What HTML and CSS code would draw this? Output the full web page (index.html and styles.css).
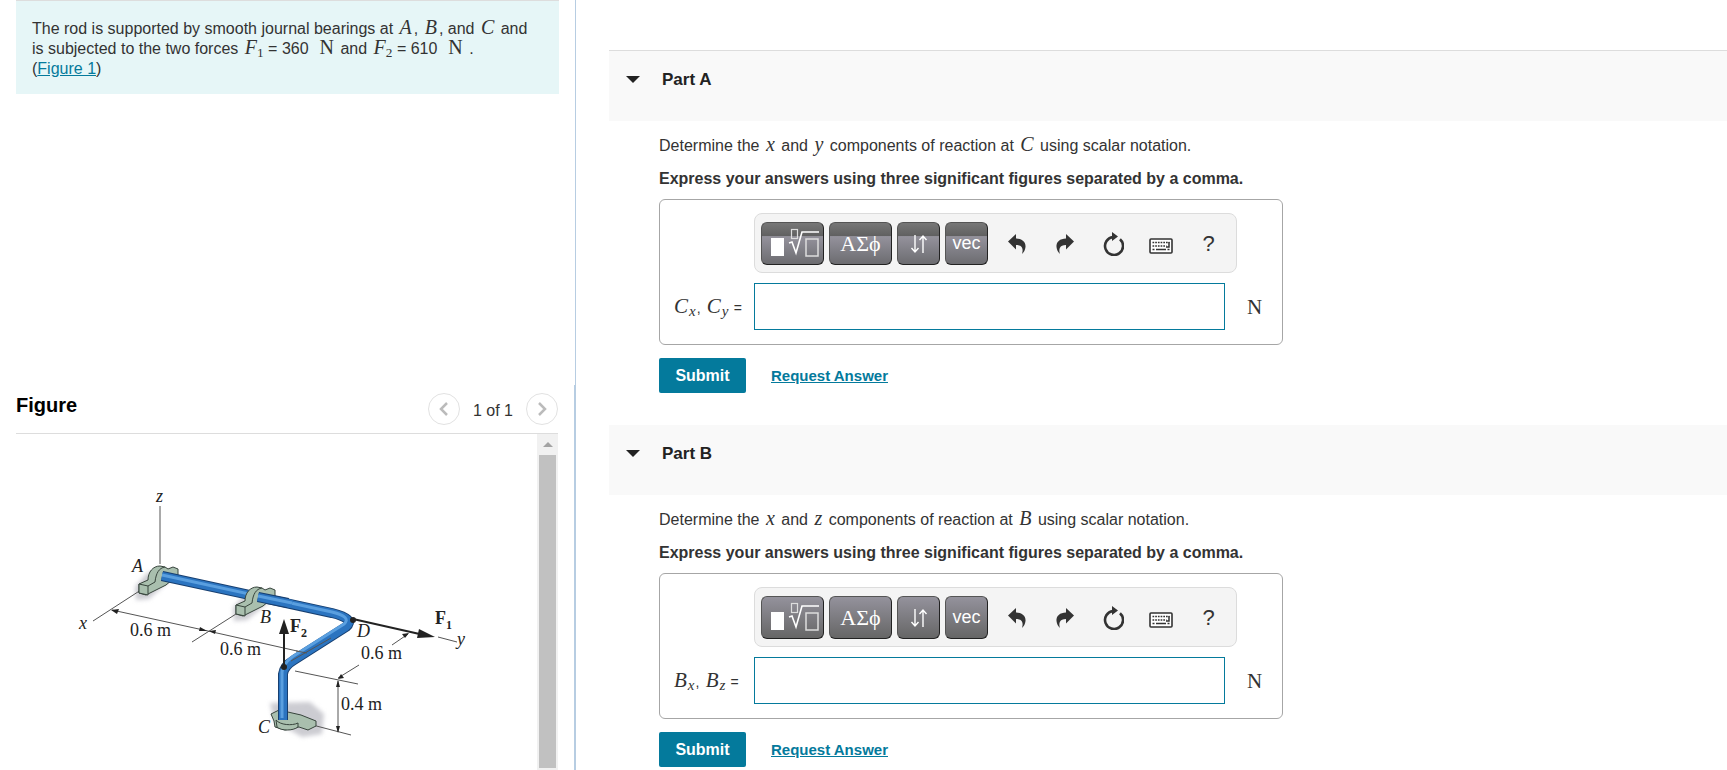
FILE: index.html
```html
<!DOCTYPE html>
<html lang="en">
<head>
  <meta charset="UTF-8">
  <meta name="viewport" content="width=device-width, initial-scale=1.0">
  <title>Journal Bearings Problem</title>
  <link rel="stylesheet" href="styles.css">
</head>
<body>
  <svg class="sprite" aria-hidden="true">
    <symbol id="icon-template" viewBox="0 0 63 43">
      <rect x="10" y="16" width="13" height="18" fill="#fff"/>
      <rect x="30.500" y="7.500" width="6" height="9" fill="none" stroke="#ddd" stroke-width="1.200"/>
      <path d="M28 21l3-1 4 11 6-21h17" fill="none" stroke="#fff" stroke-width="1.600"/>
      <rect x="45" y="17" width="12" height="17" fill="none" stroke="#ddd" stroke-width="1.500"/>
    </symbol>
    <symbol id="icon-arrows" viewBox="0 0 18 22">
      <path d="M5 2v17M1.500 15L5 19l3.500-4M13 20V3M9.500 7L13 3l3.500 4" fill="none" stroke="#fff" stroke-width="1.400"/>
    </symbol>
    <symbol id="icon-undo" viewBox="0 0 18 20">
      <path d="M0 7.500L8 0v4.500c6 0 10 3.500 9.500 8.500-.300 3-1.500 5-3.500 7 1.500-5 .500-9-6-9v4.500z" fill="#333"/>
    </symbol>
    <symbol id="icon-reset" viewBox="0 0 22 24">
      <path d="M18 7.200A9 9 0 1 1 11 5" fill="none" stroke="#333" stroke-width="2.600"/>
      <path d="M10 0l6 4.500-6 4.500z" fill="#333"/>
    </symbol>
    <symbol id="icon-keyboard" viewBox="0 0 24 16">
      <rect x="1" y="1" width="22" height="14" rx="1" fill="#fff" stroke="#333" stroke-width="1.600"/>
      <path d="M3.500 4.500h17M3.500 8h14" stroke="#333" stroke-width="1.600" stroke-dasharray="1.700 1"/>
      <path d="M3.500 11.500h2M7 11.500h10M18.500 11.500h2M20 4v5h-3" fill="none" stroke="#333" stroke-width="1.500"/>
    </symbol>
  </svg>

  <div class="page">
    <aside class="sidebar">
      <section class="problem">
        <p>The rod is supported by smooth journal bearings at <i class="math">A</i>, <i class="math">B</i>, and <i class="math">C</i> and<br>
          is subjected to the two forces <i class="math force-name">F</i><sub>1</sub> = 360 &nbsp;<span class="math">N</span> and <i class="math force-name">F</i><sub>2</sub> = 610 &nbsp;<span class="math">N</span> .<br>
          (<a href="#figure">Figure 1</a>)</p>
      </section>

      <section class="figure" id="figure">
        <div class="figure-header">
          <h2>Figure</h2>
          <div class="pager">
            <button type="button" aria-label="Previous figure">
              <svg width="10" height="16" viewBox="0 0 10 16"><path d="M8 2L2 8l6 6" fill="none" stroke="#bbb" stroke-width="2.500"/></svg>
            </button>
            <span>1 of 1</span>
            <button type="button" aria-label="Next figure">
              <svg width="10" height="16" viewBox="0 0 10 16"><path d="M2 2l6 6-6 6" fill="none" stroke="#bbb" stroke-width="2.500"/></svg>
            </button>
          </div>
        </div>
        <div class="figure-body">
          <svg class="diagram" width="420" height="290" viewBox="60 470 420 290" role="img" aria-label="Rod supported by bearings A, B and C">
            <defs>
              <filter id="soft" x="-30%" y="-30%" width="160%" height="160%"><feGaussianBlur stdDeviation="2"/></filter>
              <g id="bearing">
                <path class="steel" d="M-1 23v-9l9-4C8 2 13-4 20-4l5 1 3 2 5-2 5 2v6L26 15 6 25z"/>
                <path class="steel" d="M-1 14l9 2v9l-9-2zM8 16l7-4c1-9 4-14 10-15"/>
              </g>
            </defs>

            <!-- shadows -->
            <g fill="#ccccd2" filter="url(#soft)">
              <path d="M134 587l12-14 28-4-6 12-20 18-13 1z"/>
              <path d="M232 608l12-14 28-4-4 12-22 18-13 1z"/>
              <path d="M269 703l40-1 14 12-2 20-20 3-28-16z"/>
            </g>

            <!-- axes and dimension lines -->
            <g class="thin">
              <path d="M159 506v58M143 588l-51 33M235 614l-44 28"/>
              <path d="M111 610l96 21M207 631l98 22M294 671l63 13M300 722l50 13"/>
              <path d="M337 681v51M358 665l-21 13M391 645l16-11M437 637l19 5"/>
            </g>
            <g fill="#222">
              <path d="M110 610l8-1-2 5zM206 631l-7-4-1 4zM208 631l7-1-1 4z"/>
              <path d="M337 680l-2 7h4zM337 733l-2-7h4zM337 679l6-1-3-4zM408 633l-7 1 3 4z"/>
            </g>

            <!-- supports and rod -->
            <use href="#bearing" x="139" y="570"/>
            <path class="steel" d="M270 714l8-4 22 5 15 6v5l-8 4-9-3-14 3-10-3-1-6z"/>
            <path class="steel" d="M275 720c4 5 16 6 22 3v4c-5 4-17 4-21 0z"/>
            <path class="rod-edge" d="M161 576l170 37q24 6 14 14l-52 33q-10 6-11 14v46"/>
            <path class="rod" d="M161 576l170 37q24 6 14 14l-52 33q-10 6-11 14v46"/>
            <path class="rod-shine" d="M161 575l170 37q20 5 12 12l-52 33q-9 7-10 15v46"/>
            <use href="#bearing" x="236" y="591"/>
            <path class="rod-edge" d="M257 597l30 6"/>
            <path class="rod" d="M257 597l34 7"/>
            <path class="rod-shine" d="M257 596l34 7"/>
            <path class="thin" d="M290 661l40-23M295 651l11 2"/>

            <!-- forces -->
            <path d="M352 619l71 16M283 667v-37" fill="none" stroke="#222" stroke-width="2"/>
            <path d="M434 637l-16-8-2 9zM283 619l-5 15h10z" fill="#222"/>
            <circle cx="352" cy="620" r="3" fill="#222"/>
            <circle cx="283" cy="667" r="3" fill="#222"/>

            <g class="label">
              <text x="155" y="502">z</text>
              <text x="131" y="572">A</text>
              <text x="78" y="629">x</text>
              <text x="259" y="623">B</text>
              <text x="356" y="637">D</text>
              <text x="257" y="733">C</text>
              <text x="456" y="645">y</text>
            </g>
            <g class="measure">
              <text x="129" y="636">0.6 m</text>
              <text x="219" y="655">0.6 m</text>
              <text x="360" y="659">0.6 m</text>
              <text x="340" y="710">0.4 m</text>
            </g>
            <g class="force">
              <text x="289" y="632">F<tspan class="index" dy="5">2</tspan></text>
              <text x="434" y="624">F<tspan class="index" dy="5">1</tspan></text>
            </g>
          </svg>
          <div class="scrollbar" aria-hidden="true">
            <span class="scroll-arrow"></span>
            <span class="scroll-thumb"></span>
          </div>
        </div>
      </section>
    </aside>

    <main class="content">
      <section class="part">
        <header class="part-header">
          <span class="caret"></span>
          <h3>Part A</h3>
        </header>
        <div class="part-body">
          <p class="question">Determine the <i class="math">x</i> and <i class="math">y</i> components of reaction at <i class="math">C</i> using scalar notation.</p>
          <p class="instruction">Express your answers using three significant figures separated by a comma.</p>
          <form class="answer" id="form-a">
            <div class="toolbar toolbar-glossy">
              <button type="button" class="tool tool-wide" aria-label="Templates"><svg width="63" height="43"><use href="#icon-template"/></svg></button>
              <button type="button" class="tool tool-wide tool-greek">ΑΣϕ</button>
              <button type="button" class="tool" aria-label="Subscript and superscript"><svg width="18" height="22"><use href="#icon-arrows"/></svg></button>
              <button type="button" class="tool">vec</button>
              <button type="button" class="action" aria-label="Undo"><svg width="18" height="20"><use href="#icon-undo"/></svg></button>
              <button type="button" class="action" aria-label="Redo"><svg class="flip" width="18" height="20"><use href="#icon-undo"/></svg></button>
              <button type="button" class="action" aria-label="Reset"><svg width="22" height="24"><use href="#icon-reset"/></svg></button>
              <button type="button" class="action action-keyboard" aria-label="Keyboard shortcuts"><svg width="24" height="16"><use href="#icon-keyboard"/></svg></button>
              <button type="button" class="action" aria-label="Help">?</button>
            </div>
            <label for="answer-a"><i>C<sub>x</sub></i><small>,</small> <i>C<sub>y</sub></i> <span>=</span></label>
            <input type="text" id="answer-a">
            <span class="unit">N</span>
          </form>
          <div class="buttons">
            <button type="submit" class="submit" form="form-a">Submit</button>
            <a href="#answer-a">Request Answer</a>
          </div>
        </div>
      </section>

      <section class="part">
        <header class="part-header">
          <span class="caret"></span>
          <h3>Part B</h3>
        </header>
        <div class="part-body">
          <p class="question">Determine the <i class="math">x</i> and <i class="math">z</i> components of reaction at <i class="math">B</i> using scalar notation.</p>
          <p class="instruction">Express your answers using three significant figures separated by a comma.</p>
          <form class="answer" id="form-b">
            <div class="toolbar">
              <button type="button" class="tool tool-wide" aria-label="Templates"><svg width="63" height="43"><use href="#icon-template"/></svg></button>
              <button type="button" class="tool tool-wide tool-greek">ΑΣϕ</button>
              <button type="button" class="tool" aria-label="Subscript and superscript"><svg width="18" height="22"><use href="#icon-arrows"/></svg></button>
              <button type="button" class="tool">vec</button>
              <button type="button" class="action" aria-label="Undo"><svg width="18" height="20"><use href="#icon-undo"/></svg></button>
              <button type="button" class="action" aria-label="Redo"><svg class="flip" width="18" height="20"><use href="#icon-undo"/></svg></button>
              <button type="button" class="action" aria-label="Reset"><svg width="22" height="24"><use href="#icon-reset"/></svg></button>
              <button type="button" class="action action-keyboard" aria-label="Keyboard shortcuts"><svg width="24" height="16"><use href="#icon-keyboard"/></svg></button>
              <button type="button" class="action" aria-label="Help">?</button>
            </div>
            <label for="answer-b"><i>B<sub>x</sub></i><small>,</small> <i>B<sub>z</sub></i> <span>=</span></label>
            <input type="text" id="answer-b">
            <span class="unit">N</span>
          </form>
          <div class="buttons">
            <button type="submit" class="submit" form="form-b">Submit</button>
            <a href="#answer-b">Request Answer</a>
          </div>
        </div>
      </section>
    </main>
  </div>
</body>
</html>
```
FILE: styles.css
```css
/* Reset */
* {
  box-sizing: border-box;
  margin: 0;
  padding: 0;
}

/* Global styles */
body {
  font-family: "Liberation Sans", Arial, sans-serif;
  font-size: 16px;
  line-height: 20px;
  color: #333;
  background-color: #fff;
}

button {
  font-family: inherit;
  cursor: pointer;
}

a {
  color: #047a9c;
}

.sprite {
  display: none;
}

.math {
  padding: 0 2px;
  font-family: "Liberation Serif", "Times New Roman", serif;
  font-size: 20px;
  line-height: 16px;
}

.force-name {
  padding-right: 0;
}

sub {
  font-family: "Liberation Serif", "Times New Roman", serif;
  line-height: 0;
  vertical-align: -3px;
}

/* Page */
.page {
  display: grid;
  grid-template-columns: 576px 1fr;
  grid-template-rows: 100%;
  height: 100vh;
  overflow: hidden;
}

/* Sidebar */
.sidebar {
  display: grid;
  grid-template-rows: 1fr 1fr;
  min-height: 0;
}

.problem {
  padding: 0 16px;
  border-right: 1px solid #b7cde2;
}

.problem p {
  padding: 18px 16px 15px;
  border-top: 1px solid #ddd;
  background-color: #e6f6f7;
}

/* Figure */
.figure {
  display: flex;
  flex-direction: column;
  min-height: 0;
  padding-left: 16px;
  padding-right: 16px;
  border-right: 2px solid #b7cde2;
}

.figure-header {
  display: flex;
  justify-content: space-between;
  align-items: center;
  height: 49px;
  border-bottom: 1px solid #ddd;
}

.figure-header h2 {
  padding-bottom: 8px;
  font-size: 20px;
  line-height: 24px;
  color: #000;
}

.pager {
  display: flex;
  align-items: center;
  gap: 13px;
}

.pager span {
  padding-top: 3px;
}

.pager button {
  display: flex;
  justify-content: center;
  align-items: center;
  width: 32px;
  height: 32px;
  border: 1px solid #e2e2e2;
  border-radius: 50%;
  background-color: #fff;
}

.figure-body {
  display: flex;
  justify-content: space-between;
  flex: 1;
  min-height: 0;
}

.diagram {
  flex: none;
  margin-top: 36px;
  margin-left: 45px;
}

.scrollbar {
  display: flex;
  flex-direction: column;
  align-items: center;
  width: 21px;
  padding-bottom: 2px;
  background-color: #f1f1f1;
}

.scroll-arrow {
  margin: 8px 0;
  border: 5px solid transparent;
  border-top: 0;
  border-bottom-color: #a3a3a3;
}

.scroll-thumb {
  flex: 1;
  width: 17px;
  background-color: #c1c1c1;
}

.steel {
  fill: #a9bfae;
  stroke: #37443c;
  stroke-linejoin: round;
}

.thin {
  fill: none;
  stroke: #555;
}

.rod-edge,
.rod,
.rod-shine {
  fill: none;
  stroke: #173f70;
  stroke-width: 10;
}

.rod {
  stroke: #2b74c0;
  stroke-width: 8;
}

.rod-shine {
  stroke: #5a9fdf;
  stroke-width: 3;
}

.label,
.measure,
.force {
  font-family: "Liberation Serif", "Times New Roman", serif;
  font-size: 18px;
  fill: #222;
}

.label {
  font-style: italic;
}

.force {
  font-weight: bold;
}

.index {
  font-size: 12px;
}

/* Parts */
.content {
  padding: 50px 0 0 33px;
}

.part-header {
  display: flex;
  gap: 22px;
  height: 70px;
  padding: 19px 17px;
  background-color: #f9f9f9;
}

.part:first-child .part-header {
  height: 71px;
  border-top: 1px solid #ddd;
}

.part-header h3 {
  font-size: 17px;
  color: #222;
}

.caret {
  height: 0;
  margin-top: 6px;
  border: 7px solid transparent;
  border-top-color: #222;
  border-bottom: 0;
}

.part-body {
  padding: 15px 50px 32px;
}

.instruction {
  margin: 13px 0 10px;
  font-weight: bold;
}

/* Answer box */
.answer {
  display: grid;
  grid-template-columns: 81px 471px 1fr;
  gap: 10px 0;
  align-items: center;
  max-width: 624px;
  padding: 13px 13px 14px;
  border: 1px solid #a6a6a6;
  border-radius: 6px;
}

.toolbar {
  display: flex;
  grid-column: 2 / 4;
  gap: 5px;
  width: 483px;
  height: 60px;
  padding: 8px 6px;
  border: 1px solid #dcdcdc;
  border-radius: 8px;
  background-color: #f4f4f4;
}

.tool {
  display: flex;
  justify-content: center;
  align-items: center;
  width: 43px;
  height: 43px;
  border: 1px solid #555;
  border-right-color: #222;
  border-bottom-color: #222;
  border-radius: 6px;
  background: linear-gradient(#94929c, #666);
  color: #fff;
  font-size: 18px;
}

.toolbar-glossy .tool {
  background: linear-gradient(#777, #606060 32%, #94929c 33%, #6c6c70);
}

.tool svg {
  flex: none;
}

.tool-wide {
  width: 63px;
}

.tool-greek {
  font-family: "Liberation Serif", "Times New Roman", serif;
  font-size: 22px;
}

.action {
  display: flex;
  justify-content: center;
  align-items: center;
  width: 43px;
  height: 43px;
  border: 0;
  background: none;
  color: #333;
  font-size: 22px;
}

.tool + .action {
  margin-left: 2px;
}

.action-keyboard {
  padding-top: 5px;
}

.flip {
  transform: scaleX(-1);
}

.answer label {
  padding-left: 1px;
  font-family: "Liberation Serif", "Times New Roman", serif;
  font-size: 21px;
}

.answer label sub {
  margin-left: 1px;
  font-size: 15px;
}

.answer label small,
.answer label span {
  font-family: "Liberation Sans", Arial, sans-serif;
  font-size: 14px;
}

.answer label small {
  margin: 0 1px;
}

.answer input {
  height: 47px;
  padding: 0 10px;
  border: 1px solid #047a9c;
  font-size: 18px;
}

.unit {
  padding-left: 22px;
  font-family: "Liberation Serif", "Times New Roman", serif;
  font-size: 21px;
}

.buttons {
  display: flex;
  align-items: center;
  gap: 25px;
  margin-top: 13px;
}

.buttons a {
  font-size: 15px;
  font-weight: bold;
}

.submit {
  width: 87px;
  height: 35px;
  border: 0;
  border-radius: 2px;
  background-color: #047a9c;
  color: #fff;
  font-size: 16px;
  font-weight: bold;
}
```
